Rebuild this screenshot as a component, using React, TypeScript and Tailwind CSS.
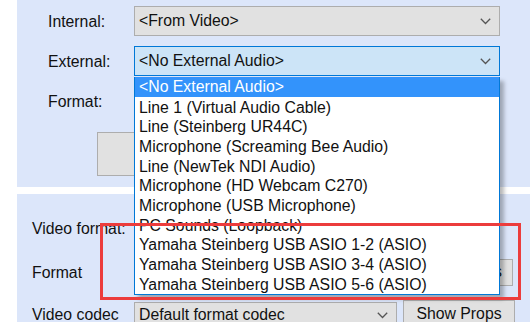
import React from 'react';

const items = [
  '<No External Audio>',
  'Line 1 (Virtual Audio Cable)',
  'Line (Steinberg UR44C)',
  'Microphone (Screaming Bee Audio)',
  'Line (NewTek NDI Audio)',
  'Microphone (HD Webcam C270)',
  'Microphone (USB Microphone)',
  'PC Sounds (Loopback)',
  'Yamaha Steinberg USB ASIO 1-2 (ASIO)',
  'Yamaha Steinberg USB ASIO 3-4 (ASIO)',
  'Yamaha Steinberg USB ASIO 5-6 (ASIO)',
];

function Chevron() {
  return (
    <svg width="11" height="7" viewBox="0 0 11 7" className="shrink-0">
      <path d="M0.8 0.8 L5.5 5.5 L10.2 0.8" fill="none" stroke="#555" strokeWidth="1.3" />
    </svg>
  );
}

function Combo({ text, active, w, h }: { text: string; active?: boolean; w: string; h: string }) {
  return (
    <div
      className={`${w} ${h} flex items-center justify-between pl-[4px] pr-[8px] border ${
        active ? 'bg-[#cce4f7] border-[#0078d7]' : 'bg-[#e1e1e1] border-[#adadad]'
      }`}
    >
      <span className="whitespace-nowrap">{text}</span>
      <Chevron />
    </div>
  );
}

function Button({ text, className }: { text: string; className: string }) {
  return (
    <div className={`bg-[#e1e1e1] border border-[#adadad] flex items-center ${className}`}>
      {text}
    </div>
  );
}

export default function App() {
  return (
    <div className="relative w-[530px] h-[322px] overflow-hidden bg-white text-[15.8px] leading-none text-[#111] font-['Liberation_Sans',Arial,sans-serif]">
      {/* Audio source panel */}
      <div className="ml-[17px] h-[187px] bg-[#dce6fa] pl-[31px] pt-[6px] flex flex-col">
        <div className="flex items-center h-[30px]">
          <span className="w-[86px] mt-[1px]">Internal:</span>
          <Combo text="<From Video>" w="w-[366px]" h="h-[30px]" />
        </div>
        <div className="flex items-center h-[30px] mt-[10px]">
          <span className="w-[86px] mt-[1px]">External:</span>
          <Combo text="<No External Audio>" active w="w-[366px]" h="h-[30px]" />
        </div>
        <div className="flex items-center h-[30px] mt-[10px]">
          <span className="w-[86px] mt-[1px]">Format:</span>
          <Combo text="" w="w-[366px]" h="h-[30px]" />
        </div>
        <Button text="" className="ml-[49px] mt-[16px] w-[140px] h-[44px]" />
      </div>

      {/* Video panel */}
      <div className="ml-[17px] mt-[7px] h-[128px] bg-[#dce6fa] pl-[15px] pt-[21px] flex flex-col">
        <div className="flex items-center h-[26px]">
          <span className="w-[102px] mt-[1px]">Video format:</span>
          <Combo text="" w="w-[366px]" h="h-[26px]" />
        </div>
        <div className="flex items-center h-[26px] mt-[18px]">
          <span className="w-[102px] mt-[1px]">Format</span>
          <Combo text="" w="w-[263px]" h="h-[26px]" />
          <Button text="Props" className="ml-[6px] w-[110px] h-[27px] justify-end pr-[10px]" />
        </div>
        <div className="flex items-start h-[26px] mt-[15px]">
          <span className="w-[102px] mt-[7px]">Video codec</span>
          <div className="mt-[2px]">
            <Combo text="Default format codec" w="w-[263px]" h="h-[26px]" />
          </div>
          <Button text="Show Props" className="ml-[6px] w-[112px] h-[28px] justify-center" />
        </div>
      </div>

      {/* Open dropdown list */}
      <div className="absolute left-[134px] top-[77px] w-[366px] bg-white border border-t-0 border-[#0078d7] shadow-[4px_4px_4px_rgba(0,0,0,0.28)]">
        {items.map((it, i) => (
          <div
            key={it}
            className={`h-[19.7px] flex items-center pl-[4px] whitespace-nowrap ${
              i === 0 ? 'bg-[#3393fb] text-white' : 'pt-[2px]'
            }`}
          >
            {it}
          </div>
        ))}
      </div>

      {/* Annotation */}
      <div className="absolute left-[100px] top-[223px] w-[421px] h-[77px] border-[3px] border-[#ec3c3c]" />
    </div>
  );
}
